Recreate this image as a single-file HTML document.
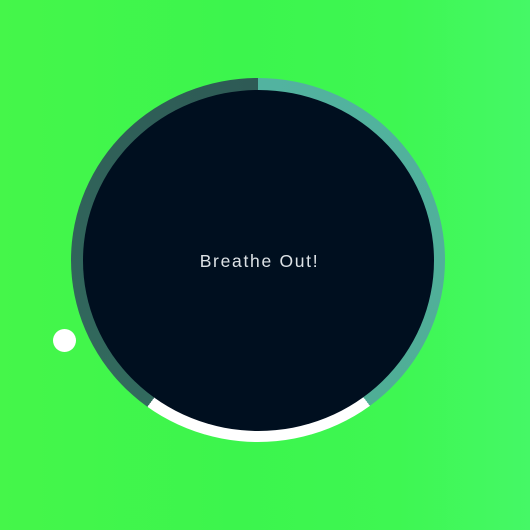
<!DOCTYPE html>
<html><head><style>
html,body{margin:0;padding:0;width:530px;height:530px;overflow:hidden;}
body{background:linear-gradient(90deg,#45f64a 0%,#3cf54d 45%,#3ef752 75%,#45f866 100%);position:relative;font-family:"Liberation Sans",sans-serif;}
.ring{position:absolute;left:71px;top:78px;width:374px;height:364px;border-radius:50%;
background:conic-gradient(#52b3a0 0deg,#4fae96 142.5deg,#fff 142.5deg,#fff 217deg,#326b5e 217deg,#2e5a55 360deg);}
.inner{position:absolute;left:83px;top:90px;width:351px;height:341px;border-radius:50%;background:#000f1f;}
.t{position:absolute;left:0;width:519px;top:251px;text-align:center;color:#dde2e6;font-size:17.5px;letter-spacing:1.7px;line-height:20px;}
.dot{position:absolute;left:53px;top:329px;width:23px;height:23px;border-radius:50%;background:#fff;}
</style></head><body>
<div class="ring"></div>
<div class="inner"></div>
<div class="t">Breathe Out!</div>
<div class="dot"></div>
</body></html>
